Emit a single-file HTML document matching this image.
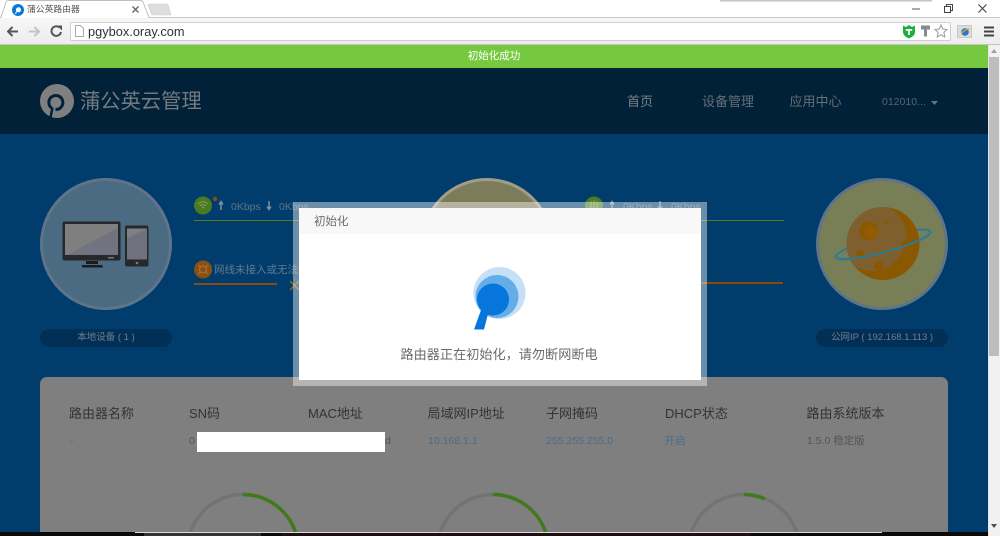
<!DOCTYPE html>
<html lang="zh">
<head>
<meta charset="utf-8">
<title>蒲公英路由器</title>
<style>
*{box-sizing:border-box;margin:0;padding:0}
html,body{width:1000px;height:536px;overflow:hidden;background:#003d6d;font-family:"Liberation Sans","Noto Sans CJK SC",sans-serif}
#w{position:absolute;left:0;top:0;width:1000px;height:536px;overflow:hidden;background:#003d6d}
.a{position:absolute;white-space:nowrap}
svg{position:absolute;display:block}
.th{font-size:13px;line-height:16px;color:#333;top:406px}
.td{font-size:10.5px;line-height:14px;top:434px;color:#555}
.bl{color:#4d6b88}
.nav{font-size:13px;line-height:18px;color:#666e76;top:93px}
.sp{font-size:10.5px;line-height:14px;color:#5f7488}
</style>
</head>
<body>
<div id="w">
<!-- browser chrome -->
<div class="a" style="left:0;top:0;width:1000px;height:18px;background:#fff"></div>
<div class="a" style="left:720px;top:0;width:212px;height:2px;background:linear-gradient(#b8b8b8,#eee)"></div>
<div class="a" style="left:0;top:17px;width:1000px;height:1px;background:#c8c8c8"></div>
<svg style="left:0;top:0" width="180" height="18"><path d="M0 17.500H1L6 2Q6.500 .5 9 .5H140Q142 .5 143 2L149 17.500" fill="#fff" stroke="#c0c0c0"/><path d="M2 17.500H148" stroke="#fff" stroke-width="2"/><path d="M148 5Q148 4 150 4H166Q168 4 168.500 6L171 15H153Q152 15 151 13Z" fill="#dcdde0" stroke="#d0d0d0" stroke-width=".6"/></svg>
<svg style="left:12px;top:4px" width="12" height="12" viewBox="0 0 12 12"><circle cx="6" cy="6" r="6" fill="#0a78d8"/><circle cx="6.500" cy="5.800" r="2.500" fill="#fff"/><path d="M4.500 7.500L3.500 10" stroke="#fff" stroke-width="1"/></svg>
<div class="a" style="left:27px;top:2px;font-size:8.800px;line-height:15px;color:#555">蒲公英路由器</div>
<svg style="left:132px;top:6px" width="7" height="7"><path d="M.5.5L6.500 6.500M6.500.5L.5 6.500" stroke="#666" stroke-width="1.400"/></svg>
<svg style="left:912px;top:8px" width="8" height="2"><path d="M0 1H8" stroke="#555" stroke-width="1"/></svg>
<svg style="left:944px;top:4px" width="9" height="9"><rect x=".5" y="2.500" width="6" height="6" fill="#fff" stroke="#444"/><path d="M2.500 2.500V.5H8.500V6.500H6.500" fill="none" stroke="#444"/></svg>
<svg style="left:978px;top:4px" width="9" height="9"><path d="M.5.5L8.500 8.500M8.500.5L.5 8.500" stroke="#444" stroke-width="1.100"/></svg>
<div class="a" style="left:0;top:18px;width:1000px;height:27px;background:linear-gradient(#f7f7f7,#ececec)"></div>
<svg style="left:7px;top:25px" width="60" height="14"><path d="M1 6.500H11M5.500 2L1 6.500L5.500 11" fill="none" stroke="#555" stroke-width="2"/><path d="M22 6.500H32M27.500 2L32 6.500L27.500 11" fill="none" stroke="#c4c4c4" stroke-width="2"/><path d="M52.500 2.500A4.800 4.800 0 1 0 54 7" fill="none" stroke="#555" stroke-width="2"/><path d="M50 .5H55V5.500Z" fill="#555"/></svg>
<div class="a" style="left:70px;top:22px;width:881px;height:19px;background:#fff;border:1px solid #cfcfcf;border-radius:2px"></div>
<svg style="left:75px;top:25px" width="9" height="12"><path d="M.5.5H5.500L8.500 3.500V11.500H.5Z" fill="#fff" stroke="#aaa"/></svg>
<div class="a" style="left:88px;top:23px;font-size:12.800px;line-height:17px;color:#2a3440">pgybox.oray.com</div>
<svg style="left:902px;top:24px" width="14" height="15" viewBox="0 0 14 15"><path d="M1 1.500L4 3 7 1l3 2 3-1.500V8Q13 12 7 14.500 1 12 1 8Z" fill="#18b23a"/><path d="M3.800 5H10.200V6.800H8V11H6V6.800H3.800Z" fill="#fff"/></svg>
<svg style="left:921px;top:25px" width="9" height="12"><path d="M0 .5H9V4.500H6V11.500H3V4.500H0Z" fill="#8a8a8a"/></svg>
<svg style="left:934px;top:24px" width="14" height="14" viewBox="0 0 14 14"><path d="M7 1L8.800 5 13 5.500 9.900 8.400 10.800 13 7 10.700 3.200 13 4.100 8.400 1 5.500 5.200 5Z" fill="#fff" stroke="#999"/></svg>
<div class="a" style="left:957px;top:25px;width:15px;height:13px;background:#dcdcdc;border:1px solid #c8c8c8"></div>
<svg style="left:960px;top:27px" width="10" height="10"><circle cx="5" cy="5" r="3.800" fill="#2a76c8"/><path d="M1.500 6.500Q5 2 9.500 2" fill="none" stroke="#e8a020" stroke-width="1.300"/></svg>
<svg style="left:984px;top:26px" width="11" height="11"><path d="M0 1.500H10M0 5.500H10M0 9.500H10" stroke="#444" stroke-width="2"/></svg>
<div class="a" style="left:0;top:44px;width:1000px;height:1px;background:#c4c4c4"></div>

<!-- green notice -->
<div class="a" style="left:0;top:45px;width:988px;height:23px;background:#76c93f;color:#fff;font-size:10.500px;line-height:23px;text-align:center">初始化成功</div>

<!-- nav -->
<div class="a" style="left:0;top:68px;width:988px;height:66px;background:#012138"></div>
<svg style="left:40px;top:84px" width="34" height="34" viewBox="0 0 34 34"><circle cx="17" cy="17" r="17" fill="#7f7f7f"/><path d="M11.500 24A7 7 0 1 1 15.500 25.500" fill="none" stroke="#012138" stroke-width="3"/><path d="M12.500 23.500L10.500 33.500" stroke="#012138" stroke-width="2.500"/></svg>
<div class="a" style="left:80px;top:88px;font-size:20.300px;line-height:28px;color:#73797e">蒲公英云管理</div>
<div class="a nav" style="left:627px;color:#7c8186">首页</div>
<div class="a nav" style="left:702px">设备管理</div>
<div class="a nav" style="left:789.500px">应用中心</div>
<div class="a" style="left:882px;top:95px;font-size:10.500px;line-height:14px;color:#566472">012010...</div>
<svg style="left:931px;top:101px" width="7" height="4"><path d="M0 0H7L3.500 4Z" fill="#6a7480"/></svg>

<!-- left circle -->
<div class="a" style="left:40px;top:178px;width:132px;height:132px;border-radius:50%;background:#4a6b82;border:3px solid #5f7488"></div>
<svg style="left:62px;top:221px" width="88" height="48"><rect x=".5" y=".5" width="58" height="39" rx="2" fill="#27282c"/><rect x="3" y="3" width="53" height="31" fill="#7f7f7f"/><path d="M5 34L56 7V34Z" fill="#71747f"/><path d="M24 40H36V43H24Z" fill="#1c1c1e"/><path d="M20 44H40Q41 45 41 46.500H20Z" fill="#1c1c1e"/><rect x="63" y="4.500" width="23.500" height="41" rx="2" fill="#27282c"/><rect x="65" y="7.500" width="20" height="31" fill="#6f727c"/><path d="M65 17L85 7.500H65Z" fill="#808080"/><circle cx="75" cy="42" r="1.300" fill="#777"/><rect x="46" y="36" width="6" height="1.500" fill="#777"/></svg>
<div class="a sp" style="left:40px;top:329px;width:132px;height:18px;border-radius:9px;background:#012f56;line-height:18px;text-align:center;font-size:9.500px;color:#6d7f8f">本地设备 ( 1 )</div>

<!-- center circle -->
<div class="a" style="left:421px;top:178px;width:132px;height:132px;border-radius:50%;background:#7d7c5a;border:3px solid #a09e88"></div>

<!-- right circle -->
<div class="a" style="left:816px;top:178px;width:132px;height:132px;border-radius:50%;background:#787f56;border:3px solid #5f7488"></div>
<svg style="left:830px;top:200px" width="106" height="86" viewBox="830 200 106 86">
<defs><clipPath id="pl"><circle cx="883" cy="243.500" r="36.500"/></clipPath></defs>
<ellipse cx="883" cy="244.500" rx="49" ry="8" transform="rotate(-15 883 244.500)" fill="none" stroke="#2a7a9a" stroke-width="2"/>
<circle cx="883" cy="243.500" r="36.500" fill="#8a5800"/>
<circle cx="872" cy="237" r="34" fill="#7f5f2e" clip-path="url(#pl)"/>
<circle cx="868.500" cy="231" r="9.500" fill="#8a5800"/><circle cx="871" cy="232" r="6.500" fill="#925c00"/>
<circle cx="887" cy="222.500" r="2" fill="#8a5800"/>
<circle cx="907" cy="245" r="5.500" fill="#8a5800"/>
<circle cx="860" cy="254.500" r="4" fill="#8a5800"/>
<circle cx="878.500" cy="265.500" r="4.500" fill="#8a5800"/>
<path d="M835.700 257.200A49 8 -15 0 0 930.300 231.800" fill="none" stroke="#2a7a9a" stroke-width="2"/>
</svg>
<div class="a sp" style="left:816px;top:329px;width:132px;height:18px;border-radius:9px;background:#012f56;line-height:18px;text-align:center;font-size:9.500px;color:#6d7f8f">公网IP ( 192.168.1.113 )</div>

<!-- lines and status -->
<div class="a" style="left:194px;top:220px;width:590px;height:1px;background:#5b7a1a"></div>
<div class="a" style="left:194px;top:283px;width:83px;height:2px;background:#8a4a10"></div>
<div class="a" style="left:600px;top:282px;width:183px;height:2px;background:#8a4a00"></div>
<svg style="left:194px;top:196px" width="26" height="19"><circle cx="9" cy="9.500" r="9" fill="#4a7a22"/><path d="M4 8Q9 3.500 14 8M6 10Q9 7.500 12 10M8 12Q9 11 10 12" fill="none" stroke="#8aa070" stroke-width="1"/><circle cx="21" cy="3" r="2.200" fill="#8a4a10"/></svg>
<svg style="left:217px;top:200px" width="8" height="11"><path d="M4 10V2M2 4.500L4 1.500 6 4.500" fill="none" stroke="#7d8f9e" stroke-width="1.500"/></svg>
<div class="a sp" style="left:231px;top:200px;font-size:10.500px">0Kbps</div>
<svg style="left:265px;top:200px" width="8" height="11"><path d="M4 1V9M2 6.500L4 9.500 6 6.500" fill="none" stroke="#7d8f9e" stroke-width="1.500"/></svg>
<div class="a sp" style="left:279px;top:200px;font-size:10.500px">0Kbps</div>
<svg style="left:194px;top:260px" width="18" height="19"><circle cx="9" cy="9.500" r="9" fill="#8a5010"/><path d="M4 5L14 14M14 5L4 14" stroke="#a07848" stroke-width="1"/><circle cx="9" cy="9.500" r="3.500" fill="#8a5010" stroke="#a07848"/></svg>
<div class="a sp" style="left:214px;top:263px;font-size:10.500px;color:#647a8e">网线未接入或无法连接</div>
<svg style="left:289px;top:280px" width="12" height="12"><path d="M1 1L10 10M10 1L1 10" stroke="#a06820" stroke-width="1.300"/></svg>
<svg style="left:585px;top:196px" width="18" height="19"><circle cx="9" cy="9.500" r="9" fill="#4a7a22"/><path d="M6 5V13M9 4V13M12 5V13" stroke="#8aa070" stroke-width="1"/></svg>
<svg style="left:608px;top:200px" width="8" height="11"><path d="M4 10V2M2 4.500L4 1.500 6 4.500" fill="none" stroke="#7d8f9e" stroke-width="1.500"/></svg>
<div class="a sp" style="left:623px;top:200px;font-size:10.500px">0Kbps</div>
<svg style="left:656px;top:200px" width="8" height="11"><path d="M4 1V9M2 6.500L4 9.500 6 6.500" fill="none" stroke="#7d8f9e" stroke-width="1.500"/></svg>
<div class="a sp" style="left:671px;top:200px;font-size:10.500px">0Kbps</div>

<!-- panel -->
<div class="a" style="left:40px;top:377px;width:908px;height:155px;background:#7f7f7f;border-radius:7px 7px 0 0"></div>
<div class="a th" style="left:69px">路由器名称</div>
<div class="a th" style="left:189px">SN码</div>
<div class="a th" style="left:308px">MAC地址</div>
<div class="a th" style="left:427.500px">局域网IP地址</div>
<div class="a th" style="left:546px">子网掩码</div>
<div class="a th" style="left:665px">DHCP状态</div>
<div class="a th" style="left:806.500px">路由系统版本</div>
<div class="a td bl" style="left:70px">-</div>
<div class="a td" style="left:189px">0</div>
<div class="a td" style="left:385px">d</div>
<div class="a" style="left:197px;top:432px;width:188px;height:20px;background:#fff"></div>
<div class="a td bl" style="left:428px">10.168.1.1</div>
<div class="a td bl" style="left:546px">255.255.255.0</div>
<div class="a td bl" style="left:664.500px">开启</div>
<div class="a td" style="left:807px">1.5.0 稳定版</div>
<svg style="left:0;top:480px" width="988" height="52" viewBox="0 480 988 52">
<g fill="none" stroke-width="3.500">
<path d="M190.500 532A55.500 55.500 0 0 1 295.500 532" stroke="#737373"/>
<path d="M440.500 532A55.500 55.500 0 0 1 545.500 532" stroke="#737373"/>
<path d="M691.500 532A55.500 55.500 0 0 1 796.500 532" stroke="#737373"/>
<path d="M243 494.500A55.500 55.500 0 0 1 295.500 532" stroke="#3f7a1c"/>
<path d="M493 494.500A55.500 55.500 0 0 1 545.500 532" stroke="#3f7a1c"/>
<path d="M744 494.500A55.500 55.500 0 0 1 765 499" stroke="#3f7a1c"/>
</g>
</svg>

<!-- modal -->
<div class="a" style="left:293px;top:202px;width:414px;height:184px;background:rgba(255,255,255,.42)"></div>
<div class="a" style="left:299px;top:208px;width:402px;height:172px;background:#fff"></div>
<div class="a" style="left:299px;top:208px;width:402px;height:26px;background:#f8f8f8"></div>
<div class="a" style="left:314px;top:214px;font-size:11.500px;line-height:16px;color:#6b6b6b">初始化</div>
<svg style="left:470px;top:265px" width="60" height="70" viewBox="470 265 60 70">
<circle cx="499.500" cy="293" r="26" fill="#c6e0f7"/>
<circle cx="497" cy="296.500" r="21.500" fill="#64ade8"/>
<circle cx="493" cy="299.500" r="16" fill="#0676dc"/>
<path d="M481 310L474 329.500H484L488 314Z" fill="#0676dc"/>
</svg>
<div class="a" style="left:400.500px;top:346px;font-size:13.150px;line-height:18px;color:#6b6b6b">路由器正在初始化，请勿断网断电</div>

<!-- scrollbar -->
<div class="a" style="left:988px;top:45px;width:12px;height:491px;background:#f1f1f1;border-left:1px solid #e4e4e4"></div>
<div class="a" style="left:989px;top:57px;width:10px;height:299px;background:#bdbdbd"></div>
<svg style="left:991px;top:49px" width="6" height="4"><path d="M0 4H6L3 0Z" fill="#a0a0a0"/></svg>
<svg style="left:991px;top:524px" width="6" height="4"><path d="M0 0H6L3 4Z" fill="#505050"/></svg>

<!-- bottom strip -->
<div class="a" style="left:0;top:532px;width:988px;height:4px;background:#0a0a0a"></div>
<div class="a" style="left:144px;top:533px;width:117px;height:3px;background:#333"></div>
<div class="a" style="left:281px;top:533px;width:470px;height:3px;background:#1e1012"></div>
<div class="a" style="left:135px;top:532px;width:747px;height:1px;background:#ddd"></div>
</div>
</body>
</html>
